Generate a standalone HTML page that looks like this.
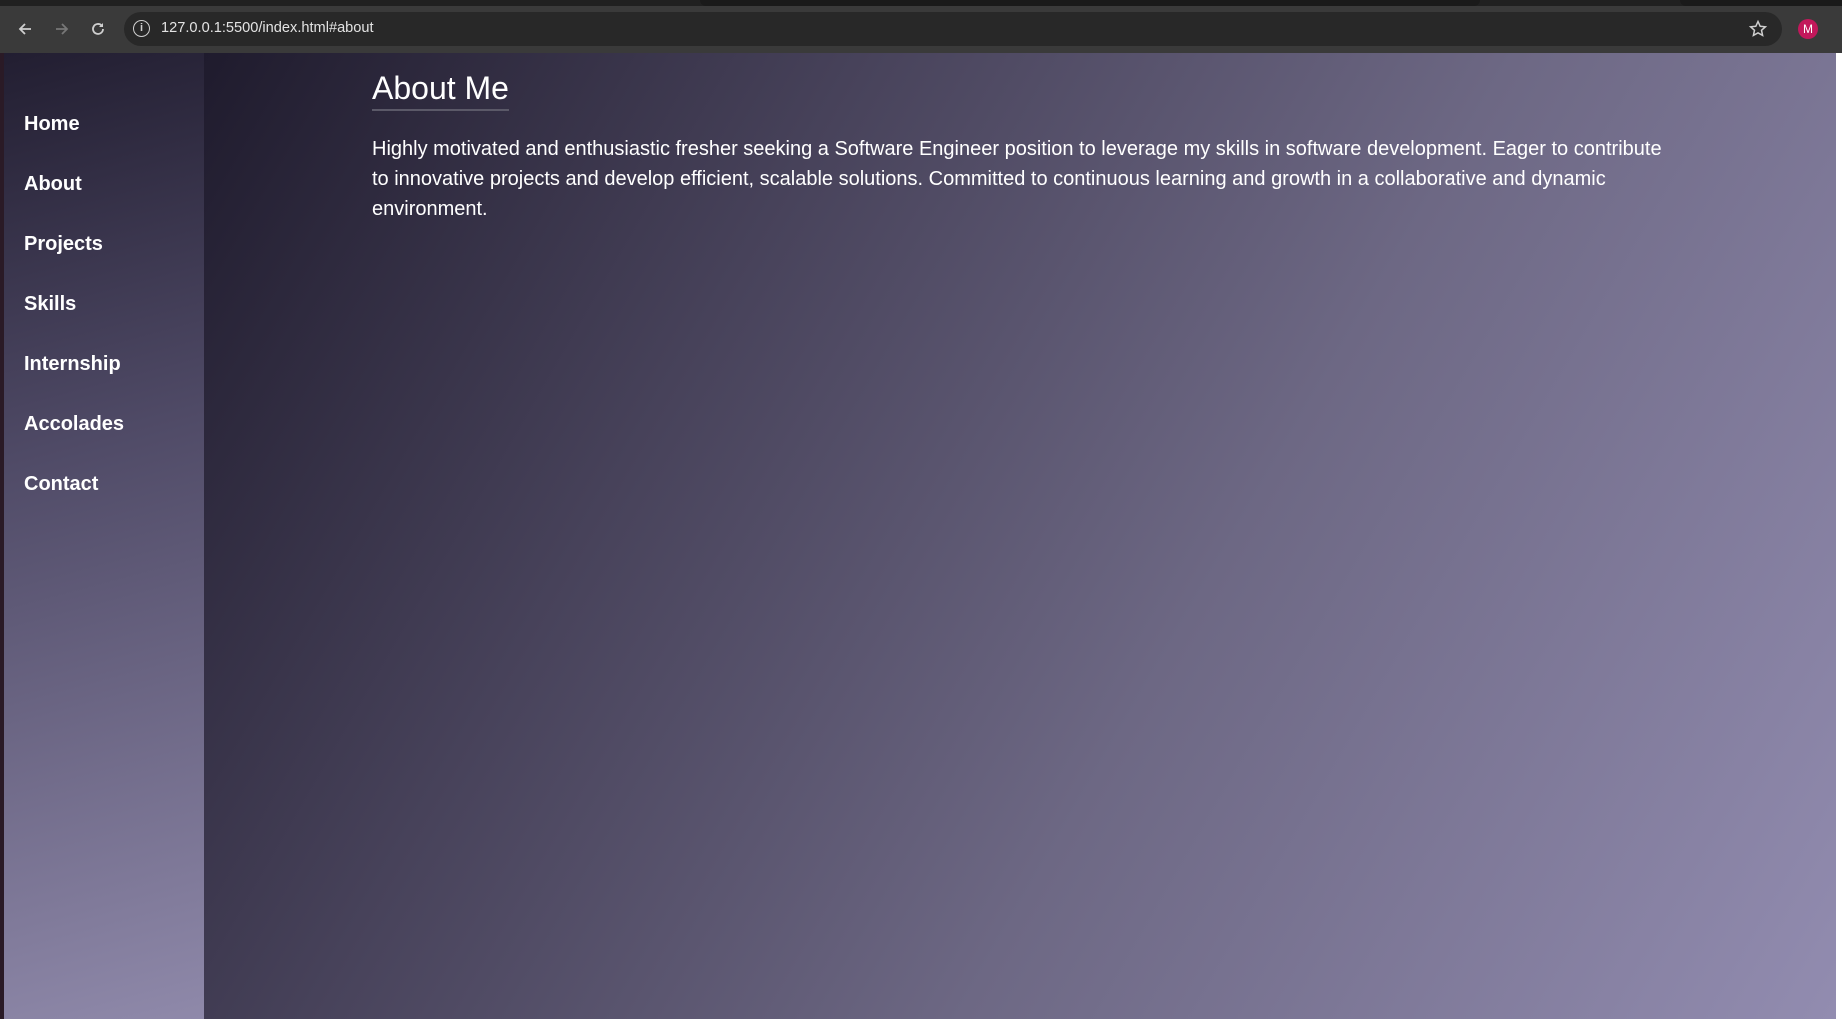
<!DOCTYPE html>
<html><head><meta charset="utf-8"><style>
*{margin:0;padding:0;box-sizing:border-box}
html,body{width:1842px;height:1019px;overflow:hidden;background:#1e1e1e;font-family:"Liberation Sans",Arial,sans-serif}
.top{position:absolute;left:0;top:0;width:1842px;height:53px;background:#3a3a3a}
.tabstrip{position:absolute;left:0;top:0;width:1842px;height:6px;background:#202020}
.tab1{position:absolute;left:700px;top:0;width:780px;height:6px;background:#1a1a1a;border-radius:0 0 10px 10px}
.tab2{position:absolute;left:1680px;top:0;width:162px;height:6px;background:#1a1a1a;border-radius:0 0 0 10px}
.omni{position:absolute;left:124px;top:12px;width:1658px;height:34px;background:#282828;border-radius:17px}
.url{position:absolute;left:161px;top:20px;color:#e3e3e3;font-size:14.6px}
.info{position:absolute;left:133px;top:20px;width:17px;height:17px;border:1.5px solid #cfcfcf;border-radius:50%;color:#cfcfcf;font-size:11px;text-align:center;line-height:14px;font-weight:bold}
.av{position:absolute;left:1798px;top:19px;width:20px;height:20px;border-radius:50%;background:#c2185b;color:#fff;font-size:12px;text-align:center;line-height:20px}
.page{position:absolute;left:0;top:53px;width:1842px;height:966px}
.edge{position:absolute;left:0;top:0;width:4px;height:966px;background:#2a1a26}
.side{position:absolute;left:4px;top:0;width:200px;height:966px;background:linear-gradient(165deg,#221e31 0%,#4f4a66 40%,#8f89aa 100%)}
.side a{position:absolute;left:20px;color:#fff;font-weight:bold;font-size:20px;text-decoration:none}
.main{position:absolute;left:204px;top:0;width:1632px;height:966px;background:linear-gradient(120deg,#1f1b2d 0%,#47425a 30%,#6d6884 60%,#928cb0 100%)}
.sb{position:absolute;left:1836px;top:0;width:6px;height:966px;background:#fff}
h2{position:absolute;left:168px;top:17px;font-weight:normal;font-size:32px;color:#fff;border-bottom:2px solid #5b5968;padding-bottom:2px;line-height:37px}
p{position:absolute;left:168px;top:81px;width:1300px;font-size:20px;line-height:30px;color:#fff}
</style></head><body>
<div class="top"><div class="tabstrip"></div><div class="tab1"></div><div class="tab2"></div>
<svg style="position:absolute;left:16px;top:20px" width="18" height="18" viewBox="0 0 18 18"><path d="M15 9H4M9 4L4 9l5 5" stroke="#cfcfcf" stroke-width="1.8" fill="none"/></svg>
<svg style="position:absolute;left:53px;top:20px" width="18" height="18" viewBox="0 0 18 18"><path d="M3 9h11M9 4l5 5-5 5" stroke="#777" stroke-width="1.8" fill="none"/></svg>
<svg style="position:absolute;left:89px;top:20px" width="18" height="18" viewBox="0 0 18 18"><path d="M14 9a5 5 0 1 1-1.5-3.6" stroke="#cfcfcf" stroke-width="1.8" fill="none"/><path d="M14 3v4h-4z" fill="#cfcfcf"/></svg>
<div class="omni"></div><div class="info">i</div><div class="url">127.0.0.1:5500/index.html#about</div>
<svg style="position:absolute;left:1748px;top:19px" width="20" height="20" viewBox="0 0 20 20"><path d="M10 2.5l2.2 4.8 5.2.5-3.9 3.5 1.1 5.1L10 13.8l-4.6 2.6 1.1-5.1-3.9-3.5 5.2-.5z" stroke="#cfcfcf" stroke-width="1.5" fill="none"/></svg>
<div class="av">M</div></div>
<div class="page"><div class="edge"></div>
<div class="side">
<a style="top:60px">Home</a><a style="top:120px">About</a><a style="top:180px">Projects</a><a style="top:240px">Skills</a><a style="top:300px">Internship</a><a style="top:360px">Accolades</a><a style="top:420px">Contact</a>
</div>
<div class="main"><h2>About Me</h2>
<p>Highly motivated and enthusiastic fresher seeking a Software Engineer position to leverage my skills in software development. Eager to contribute to innovative projects and develop efficient, scalable solutions. Committed to continuous learning and growth in a collaborative and dynamic environment.</p></div>
<div class="sb"></div></div>
</body></html>
